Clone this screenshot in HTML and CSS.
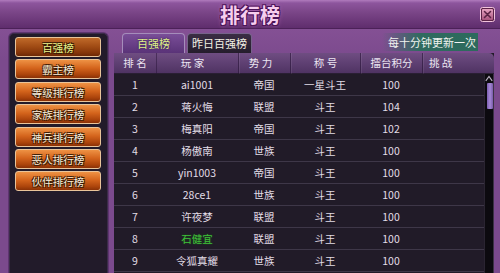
FILE: index.html
```html
<!DOCTYPE html>
<html lang="zh">
<head>
<meta charset="utf-8">
<title>排行榜</title>
<link rel="stylesheet" href="styles.css">
</head>
<body>
<div class="titlebar">
  <span class="title">排行榜</span>
  <span class="close">
    <svg width="15" height="15" viewBox="0 0 15 15">
      <defs>
        <linearGradient id="cg" x1="0" y1="0" x2="0" y2="1">
          <stop offset="0" stop-color="#e7a3c2"/>
          <stop offset="1" stop-color="#a9557e"/>
        </linearGradient>
      </defs>
      <rect x="0.5" y="0.5" width="14" height="14" rx="2" fill="#5b2447" stroke="#f2c3dc"/>
      <rect x="2" y="2" width="11" height="11" rx="1" fill="url(#cg)"/>
      <path d="M4.5 4.5 L10.5 10.5 M10.5 4.5 L4.5 10.5" stroke="#5a2344" stroke-width="1.6" stroke-linecap="round"/>
    </svg>
  </span>
</div>
<div class="main">
  <div class="side">
    <div class="btn active">百强榜</div>
    <div class="btn">霸主榜</div>
    <div class="btn">等级排行榜</div>
    <div class="btn">家族排行榜</div>
    <div class="btn">神兵排行榜</div>
    <div class="btn">恶人排行榜</div>
    <div class="btn">伙伴排行榜</div>
  </div>
  <div class="content">
    <div class="tabs">
      <div class="tab active">百强榜</div>
      <div class="tab second">昨日百强榜</div>
      <div class="notice">每十分钟更新一次</div>
    </div>
    <div class="table">
      <div class="thead">
        <div class="th c1">排 名</div>
        <div class="th c2">玩 家</div>
        <div class="th c3">势 力</div>
        <div class="th c4">称 号</div>
        <div class="th c5">擂台积分</div>
        <div class="th c6">挑 战</div>
        <div class="th c7"></div>
      </div>
      <div class="tbody">
        <div class="rows">
          <div class="row"><span>1</span><span>ai1001</span><span>帝国</span><span>一星斗王</span><span>100</span><span></span></div>
          <div class="row"><span>2</span><span>蒋火悔</span><span>联盟</span><span>斗王</span><span>104</span><span></span></div>
          <div class="row"><span>3</span><span>梅真阳</span><span>帝国</span><span>斗王</span><span>102</span><span></span></div>
          <div class="row"><span>4</span><span>杨傲南</span><span>世族</span><span>斗王</span><span>100</span><span></span></div>
          <div class="row"><span>5</span><span>yin1003</span><span>帝国</span><span>斗王</span><span>100</span><span></span></div>
          <div class="row"><span>6</span><span>28ce1</span><span>世族</span><span>斗王</span><span>100</span><span></span></div>
          <div class="row"><span>7</span><span>许夜梦</span><span>联盟</span><span>斗王</span><span>100</span><span></span></div>
          <div class="row"><span>8</span><span class="green">石健宜</span><span>联盟</span><span>斗王</span><span>100</span><span></span></div>
          <div class="row"><span>9</span><span>令狐真耀</span><span>世族</span><span>斗王</span><span>100</span><span></span></div>
        </div>
        <div class="scroll">
          <svg class="arrow" width="8" height="7" viewBox="0 0 8 7">
            <path d="M0.8 5.8 L4 1.5 L7.2 5.8" fill="none" stroke="#b8b0c0" stroke-width="1.2"/>
          </svg>
          <div class="thumb"></div>
        </div>
      </div>
    </div>
  </div>
</div>
</body>
</html>
```

FILE: styles.css
```css
* {
  box-sizing: border-box;
  margin: 0;
  padding: 0;
}

html, body {
  width: 500px;
  height: 273px;
  overflow: hidden;
}

body {
  background: #7b4a8d;
  font-family: "Noto Sans CJK SC", "Noto Sans", sans-serif;
  font-size: 10.5px;
  color: #e2dde6;
}

.titlebar {
  height: 29px;
  display: grid;
  grid-template-columns: 1fr auto 1fr;
  align-items: center;
  background: linear-gradient(#b07bbd 0, #8d559d 3px, #7a4587 45%, #5f2d6d 100%);
  border-bottom: 1px solid #4c2158;
}

.title {
  grid-column: 2;
  font-size: 20px;
  font-weight: bold;
  line-height: 1;
  padding-top: 2px;
  color: #f6cdee;
  text-shadow: 1px 1px 0 #4a1356, -1px -1px 0 #4a1356, 1px -1px 0 #4a1356, -1px 1px 0 #4a1356, 0 0 4px #c36fc0;
}

.close {
  grid-column: 3;
  justify-self: end;
  margin-right: 5px;
  width: 15px;
  height: 15px;
  display: flex;
}

.main {
  display: flex;
  height: 244px;
  padding: 4px 6px 0 9px;
  gap: 6px;
  background: linear-gradient(#845094, #7b4a8d 30px);
}

.side {
  width: 99px;
  background: #221b2a;
  border: 1px solid #3b2c49;
  border-bottom: none;
  border-radius: 5px 5px 0 0;
  padding: 3px 6px 0 5px;
  display: flex;
  flex-direction: column;
  gap: 2.4px;
  box-shadow: 0 0 0 1px #5e3570;
}

.btn {
  height: 20px;
  line-height: 19px;
  text-align: center;
  font-size: 10.5px;
  color: #f6eedc;
  border: 1px solid #e9c49a;
  border-radius: 3px;
  background: linear-gradient(#ee9244 0, #d4641c 45%, #ad450c 80%, #8a3106 100%);
  text-shadow: 1px 1px 0 #3a1a06, -1px -1px 0 #3a1a06, 1px -1px 0 #3a1a06, -1px 1px 0 #3a1a06;
}

.btn.active {
  color: #e6f38a;
  background: linear-gradient(#c06a2a 0, #a24d15 45%, #86360a 80%, #6c2806 100%);
}

.content {
  width: 380px;
  display: flex;
  flex-direction: column;
}

.tabs {
  height: 20px;
  display: flex;
  padding-left: 8px;
  gap: 2px;
}

.tab {
  height: 20px;
  line-height: 19px;
  text-align: center;
  font-size: 11px;
  border: 1px solid #a58dbb;
  border-bottom: none;
  border-radius: 4px 4px 0 0;
}

.tab.active {
  width: 63px;
  color: #dff28c;
  background: linear-gradient(#7a4e98, #5a3378);
  text-shadow: 0 0 2px #2c1540;
}

.tab.second {
  width: 65px;
  color: #f3f1e4;
  background: linear-gradient(#3a2d44, #251d2c);
  border-color: #76638a;
}

.notice {
  margin-left: auto;
  margin-right: 16px;
  width: 96px;
  height: 18px;
  line-height: 18px;
  text-align: right;
  padding-right: 2px;
  font-size: 11px;
  color: #f1f3f0;
  background: linear-gradient(90deg, rgba(46, 106, 96, 0) 0, #2f6b5f 40%, #2d6a5d 100%);
}

.table {
  flex: 1;
  display: flex;
  flex-direction: column;
  background: #211b28;
}

.thead {
  height: 21px;
  display: grid;
  grid-template-columns: 42px 82px 52px 70px 62px 62px 10px;
  align-items: center;
  background: linear-gradient(#6f4d82, #4f3363);
  border-bottom: 1px solid #2a1f34;
  border-radius: 0 5px 0 0;
  color: #ece6f2;
  font-size: 10.5px;
}

.th {
  height: 21px;
  line-height: 20px;
  text-align: center;
  white-space: pre;
}

.th.c2 { padding-right: 10px; border-left: 1px solid rgba(40, 20, 55, 0.5); }
.th.c3 { padding-right: 8px; border-left: 1px solid rgba(40, 20, 55, 0.6); box-shadow: inset 1px 0 rgba(255, 255, 255, 0.08); }
.th.c4 { border-left: 1px solid rgba(40, 20, 55, 0.6); box-shadow: inset 1px 0 rgba(255, 255, 255, 0.08); }
.th.c5 { border-left: 1px solid rgba(40, 20, 55, 0.6); box-shadow: inset 1px 0 rgba(255, 255, 255, 0.08); }
.th.c6 { text-align: left; padding-left: 6px; border-left: 1px solid rgba(40, 20, 55, 0.6); box-shadow: inset 1px 0 rgba(255, 255, 255, 0.08); }

.tbody {
  flex: 1;
  display: flex;
}

.rows {
  width: 370px;
}

.row {
  height: 22px;
  display: grid;
  grid-template-columns: 42px 82px 52px 70px 62px 62px;
  align-items: center;
  border-bottom: 1px solid #3e3748;
  text-align: center;
  line-height: 21px;
}

.green {
  color: #3fbf3a;
  text-shadow: 0 0 2px #1d5a1a;
}

.scroll {
  width: 10px;
  background: #0c0a0f;
  border-left: 1px solid #2a2431;
  border-right: 1px solid #3c3245;
  display: flex;
  flex-direction: column;
  align-items: center;
  padding-top: 1px;
}

.arrow {
  display: block;
  margin-top: 0;
}

.thumb {
  width: 6px;
  height: 26px;
  margin-top: 1px;
  margin-left: 1px;
  border-radius: 1px;
  background: linear-gradient(90deg, #7d5fb3, #a689d6 50%, #7a5bab);
}
```
